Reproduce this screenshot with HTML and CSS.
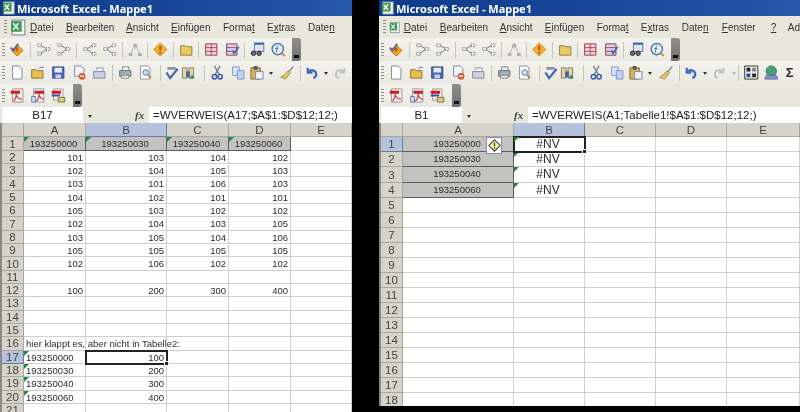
FILE: index.html
```html
<!DOCTYPE html>
<html lang="de">
  <head>
    <meta charset="UTF-8" />
    <title>Microsoft Excel - Mappe1</title>
    <link rel="stylesheet" href="styles.css">
  </head>
  <body>
    <!-- shared toolbar icons -->
    <svg class="defs" width="0" height="0">
      <symbol id="i-xl" viewBox="0 0 16 16"><rect x="2" y="1" width="12" height="14" fill="#f4f4e8" stroke="#7d8aa8"/><rect x="1" y="2" width="10" height="10" fill="#3f9a55"/><path d="M3 4l5 6M8 4l-5 6" stroke="#fff" stroke-width="1.4"/></symbol>
      <symbol id="i-check" viewBox="0 0 16 16"><path d="M8 3l6 6-6 6-6-6z" fill="#f0a818" stroke="#b86c10"/><path d="M8 6v4" stroke="#c0401c" stroke-width="2"/><path d="M1 6l3 3 5-7" fill="none" stroke="#5a6aa0" stroke-width="2"/></symbol>
      <symbol id="i-prec" viewBox="0 0 16 16"><g fill="none" stroke="#666"><path d="M2 2h4v3H2zM2 11h4v3H2zM11 6h4v3h-4z" stroke-dasharray="1 1"/><path d="M6 4l5 3M6 12l5-4" stroke="#5c6ca8"/></g></symbol>
      <symbol id="i-dep" viewBox="0 0 16 16"><g fill="none" stroke="#666"><path d="M2 6h4v3H2zM11 2h4v3h-4zM11 11h4v3h-4z" stroke-dasharray="1 1"/><path d="M6 7l5-3M6 8l5 4" stroke="#5c6ca8"/></g></symbol>
      <symbol id="i-rem" viewBox="0 0 16 16"><g fill="none" stroke="#777" stroke-dasharray="1 1"><path d="M8 2l-5 11M8 2l5 11M8 2v5"/></g><path d="M6 2h4v3H6zM1 12h4v3H1zM11 12h4v3h-4z" fill="#aab"/></symbol>
      <symbol id="i-warn" viewBox="0 0 16 16"><path d="M8 1l7 7-7 7-7-7z" fill="#f2b42c" stroke="#c98a1c"/><path d="M8 4v5M8 10.5v2" stroke="#c8401c" stroke-width="2"/></symbol>
      <symbol id="i-smart" viewBox="0 0 16 16"><path d="M8 1l7 7-7 7-7-7z" fill="#f6f0a0" stroke="#3c3c30" stroke-width="1.3"/><path d="M8 4.5v4.5M8 10v2" stroke="#333" stroke-width="1.5"/></symbol>
      <symbol id="i-folder" viewBox="0 0 16 16"><path d="M2 4h5l1 1h6v9H2z" fill="#eccb60" stroke="#8a7a4c"/></symbol>
      <symbol id="i-watch" viewBox="0 0 16 16"><path d="M2 2h12v12H2z" fill="#e8d8dc" stroke="#a03048"/><path d="M2 6h12M2 10h12M8 2v12" stroke="#b84058"/></symbol>
      <symbol id="i-watch2" viewBox="0 0 16 16"><path d="M2 2h11v12H2z" fill="#dcd4e4" stroke="#803858"/><path d="M2 6h11M2 10h11" stroke="#a84060"/><path d="M8 9l2 3 5-7" fill="none" stroke="#506ab0" stroke-width="2"/></symbol>
      <symbol id="i-eval" viewBox="0 0 16 16"><rect x="5" y="1" width="10" height="9" fill="#dfe4ee" stroke="#5f78a8"/><path d="M5 1h10v2H5z" fill="#3c64b0"/><circle cx="4" cy="12" r="2.4" fill="#667" stroke="#333"/><circle cx="10" cy="12" r="2.4" fill="#667" stroke="#333"/></symbol>
      <symbol id="i-fx" viewBox="0 0 16 16"><circle cx="7.5" cy="7.5" r="6" fill="#e4ecf6" stroke="#5878a8" stroke-width="1.6"/><path d="M12 12l3 3" stroke="#c89038" stroke-width="2"/><path d="M8 4c-2 0-1 3-2 7M5 7h3" fill="none" stroke="#3c64a8"/></symbol>
      <symbol id="i-new" viewBox="0 0 16 16"><path d="M3 1h7l3 3v11H3z" fill="#fff" stroke="#7a8598"/></symbol>
      <symbol id="i-open" viewBox="0 0 16 16"><path d="M1 5h5l1 1h6v8H1z" fill="#e8c050" stroke="#8c7038"/><path d="M9 4c1-2 3-2 5-1" fill="none" stroke="#4c6cb0"/></symbol>
      <symbol id="i-save" viewBox="0 0 16 16"><path d="M2 2h12v12H2z" fill="#4c64b4" stroke="#384c90"/><path d="M4 3h8v5H4z" fill="#e8ecf4"/><path d="M5 10h6v4H5z" fill="#c8cede"/></symbol>
      <symbol id="i-perm" viewBox="0 0 16 16"><path d="M3 1h7l3 3v8H3z" fill="#f4f4f8" stroke="#7a85a0"/><circle cx="11" cy="12" r="3.6" fill="#d85a30"/><path d="M9 12h4" stroke="#fff" stroke-width="1.4"/></symbol>
      <symbol id="i-mail" viewBox="0 0 16 16"><path d="M5 5V3h7v4" fill="#eef" stroke="#8a94aa"/><path d="M2 7h12v7H2z" fill="#cdd3df" stroke="#7f8aa0"/><path d="M5 7h6" stroke="#8a94aa"/></symbol>
      <symbol id="i-print" viewBox="0 0 16 16"><path d="M5 2h7v4H5z" fill="#f0f2f4" stroke="#7c8690"/><path d="M2 6h12v6H2z" fill="#a7b0b4" stroke="#66707a"/><path d="M4 11h8v3H4z" fill="#f4f4f4" stroke="#77808a"/><path d="M3 8h2" stroke="#46a860"/></symbol>
      <symbol id="i-prev" viewBox="0 0 16 16"><path d="M3 1h8l2 2v12H3z" fill="#fff" stroke="#8a90a0"/><circle cx="8.5" cy="8" r="3" fill="#cfe0f0" stroke="#59708e"/><path d="M11 10.5l3 3.5" stroke="#b88838" stroke-width="2"/></symbol>
      <symbol id="i-spell" viewBox="0 0 16 16"><path d="M2 8l4 6 8-10" fill="none" stroke="#4a66b0" stroke-width="2.4"/><path d="M3 2h9v3H3z" fill="#8a93a8"/></symbol>
      <symbol id="i-res" viewBox="0 0 16 16"><path d="M2 3h5v11H2zM9 3h5v11H9z" fill="#e2d6a4" stroke="#80806a"/><path d="M6 7h4v6H6z" fill="#4e62a0"/><circle cx="12.5" cy="13" r="2" fill="#486" /></symbol>
      <symbol id="i-cut" viewBox="0 0 16 16"><path d="M5 1l5 9M11 1L6 10" stroke="#7a8290" stroke-width="1.5"/><circle cx="5" cy="12.5" r="2.3" fill="none" stroke="#3a5ca8" stroke-width="1.6"/><circle cx="11" cy="12.5" r="2.3" fill="none" stroke="#3a5ca8" stroke-width="1.6"/></symbol>
      <symbol id="i-copy" viewBox="0 0 16 16"><path d="M2 2h7v9H2z" fill="#dce6f6" stroke="#7c94c4"/><path d="M7 6h7v9H7z" fill="#c4d4f0" stroke="#7c94c4"/></symbol>
      <symbol id="i-paste" viewBox="0 0 16 16"><path d="M2 3h10v12H2z" fill="#d8b458" stroke="#806828"/><path d="M5 1h4v4H5z" fill="#556" /><path d="M7 7h8v8H7z" fill="#f0f2f8" stroke="#7c88a8"/></symbol>
      <symbol id="i-brush" viewBox="0 0 16 16"><path d="M9 7l5-6 1 1-5 6z" fill="#7a8aa0"/><path d="M9 6l2 3-5 6-5-2c3-1 5-4 8-7z" fill="#e6c660" stroke="#9c8a40"/></symbol>
      <symbol id="i-undo" viewBox="0 0 16 16"><path d="M4 3v5h5M4 8c3-4 9-3 9 2 0 2-1 3-3 4" fill="none" stroke="#3f6cc0" stroke-width="2.4"/></symbol>
      <symbol id="i-redo" viewBox="0 0 16 16"><path d="M12 3v5H7M12 8C9 4 3 5 3 10c0 2 1 3 3 4" fill="none" stroke="#c0c4c0" stroke-width="2.2"/></symbol>
      <symbol id="i-calc" viewBox="0 0 16 16"><path d="M1 1h14v14H1z" fill="#ecece4" stroke="#333"/><path d="M3 3h4v4H3zM9 9h4v4H9z" fill="#223"/><path d="M9 3h4v4H9z" fill="#7c8478"/><path d="M3 9h4v4H3z" fill="#2850b0"/></symbol>
      <symbol id="i-globe" viewBox="0 0 16 16"><circle cx="8" cy="6.5" r="5.5" fill="#4c9c78" stroke="#37746a"/><path d="M3 11h10l2 4H1z" fill="#8494c8" stroke="#5864a0"/></symbol>
      <symbol id="i-pdf" viewBox="0 0 16 16"><path d="M3 1h11v14H3z" fill="#f6f2f2" stroke="#a08c8c"/><path d="M1 3h10v3H1z" fill="#c81c24"/><path d="M7 6c0 4-1 6-3 8M7 8c1 2 3 4 6 4" fill="none" stroke="#d03038" stroke-width="1.2"/></symbol>
      <symbol id="i-pdf2" viewBox="0 0 16 16"><path d="M3 1h11v14H3z" fill="#f6f2f2" stroke="#8c98b8"/><path d="M4 3h10v3H4z" fill="#c81c24"/><path d="M9 6c0 4-1 6-3 8M9 8c1 2 3 4 5 4" fill="none" stroke="#d03038" stroke-width="1.2"/><path d="M1 9h4v6H1z" fill="#d8e0f0" stroke="#5878b8"/></symbol>
      <symbol id="i-pdf3" viewBox="0 0 16 16"><path d="M3 1h10v12H3z" fill="#f4f0e8" stroke="#a09c8c"/><path d="M1 3h10v3H1z" fill="#c81c24"/><path d="M1 7h9v2H1z" fill="#3c50b0"/><path d="M8 10h7v5H8z" fill="#d8c880" stroke="#807038"/></symbol>
    </svg>

    <section class="window left">
      <div class="titlebar"><svg class="app-icon"><use href="#i-xl" /></svg>Microsoft Excel - Mappe1</div>
      <nav class="menubar">
        <span class="grip"></span><svg class="doc-icon"><use href="#i-xl" /></svg>
        <span class="m-datei"><u>D</u>atei</span>
        <span class="m-bearb"><u>B</u>earbeiten</span>
        <span class="m-ansicht"><u>A</u>nsicht</span>
        <span class="m-einf"><u>E</u>infügen</span>
        <span class="m-format">Forma<u>t</u></span>
        <span class="m-extras">E<u>x</u>tras</span>
        <span class="m-daten">Date<u>n</u></span>
      </nav>
      <div class="toolrow">
        <div class="band">
          <span class="grip"></span>
          <svg class="btn"><use href="#i-check" /></svg><i class="sep"></i>
          <svg class="btn"><use href="#i-prec" /></svg><svg class="btn"><use href="#i-prec" /></svg><i class="sep"></i>
          <svg class="btn"><use href="#i-dep" /></svg><svg class="btn"><use href="#i-dep" /></svg><i class="sep"></i>
          <svg class="btn"><use href="#i-rem" /></svg><i class="sep"></i>
          <svg class="btn"><use href="#i-warn" /></svg><i class="sep"></i>
          <svg class="btn"><use href="#i-folder" /></svg><i class="sep"></i>
          <svg class="btn"><use href="#i-watch" /></svg><svg class="btn"><use href="#i-watch2" /></svg><i class="sep"></i>
          <svg class="btn"><use href="#i-eval" /></svg><svg class="btn"><use href="#i-fx" /></svg>
        </div>
        <span class="handle"></span>
      </div>
      <div class="toolrow">
        <div class="band fill">
          <span class="grip"></span>
          <svg class="btn"><use href="#i-new" /></svg><svg class="btn"><use href="#i-open" /></svg><svg class="btn"><use href="#i-save" /></svg><svg class="btn"><use href="#i-perm" /></svg><svg class="btn"><use href="#i-mail" /></svg><i class="sep"></i>
          <svg class="btn"><use href="#i-print" /></svg><svg class="btn"><use href="#i-prev" /></svg><i class="sep sep-a"></i>
          <svg class="btn tiny"><use href="#i-spell" /></svg><svg class="btn tiny"><use href="#i-res" /></svg><i class="sep sep-b"></i>
          <svg class="btn"><use href="#i-cut" /></svg><svg class="btn"><use href="#i-copy" /></svg><svg class="btn narrow"><use href="#i-paste" /></svg><b class="drop"></b><svg class="btn"><use href="#i-brush" /></svg><i class="sep"></i>
          <svg class="btn narrow"><use href="#i-undo" /></svg><b class="drop"></b><svg class="btn narrow"><use href="#i-redo" /></svg>
        </div>
      </div>
      <div class="toolrow">
        <div class="band">
          <span class="grip"></span>
          <svg class="btn"><use href="#i-pdf" /></svg><svg class="btn"><use href="#i-pdf2" /></svg><svg class="btn"><use href="#i-pdf3" /></svg>
        </div>
        <span class="handle"></span>
      </div>
      <div class="formula">
        <div class="namebox">B17</div>
        <b class="drop name-drop"></b>
        <em class="fx">fx</em>
        <div class="formula-input">=WVERWEIS(A17;$A$1:$D$12;12;)</div>
      </div>
      <div class="sheet">
        <div class="corner"></div><div class="hd">A</div><div class="hd on">B</div><div class="hd">C</div><div class="hd">D</div><div class="hd">E</div>
        <div class="rn">1</div><div class="c key tick">193250000</div><div class="c key tick">193250030</div><div class="c key tick">193250040</div><div class="c key tick">193250060</div><div class="c"></div>
        <div class="rn">2</div><div class="c">101</div><div class="c">103</div><div class="c">104</div><div class="c">102</div><div class="c"></div>
        <div class="rn">3</div><div class="c">102</div><div class="c">104</div><div class="c">105</div><div class="c">103</div><div class="c"></div>
        <div class="rn">4</div><div class="c">103</div><div class="c">101</div><div class="c">106</div><div class="c">103</div><div class="c"></div>
        <div class="rn">5</div><div class="c">104</div><div class="c">102</div><div class="c">101</div><div class="c">101</div><div class="c"></div>
        <div class="rn">6</div><div class="c">105</div><div class="c">103</div><div class="c">102</div><div class="c">102</div><div class="c"></div>
        <div class="rn">7</div><div class="c">102</div><div class="c">104</div><div class="c">103</div><div class="c">105</div><div class="c"></div>
        <div class="rn">8</div><div class="c">103</div><div class="c">105</div><div class="c">104</div><div class="c">106</div><div class="c"></div>
        <div class="rn">9</div><div class="c">105</div><div class="c">105</div><div class="c">105</div><div class="c">105</div><div class="c"></div>
        <div class="rn">10</div><div class="c">102</div><div class="c">106</div><div class="c">102</div><div class="c">102</div><div class="c"></div>
        <div class="rn">11</div><div class="c"></div><div class="c"></div><div class="c"></div><div class="c"></div><div class="c"></div>
        <div class="rn">12</div><div class="c">100</div><div class="c">200</div><div class="c">300</div><div class="c">400</div><div class="c"></div>
        <div class="rn">13</div><div class="c"></div><div class="c"></div><div class="c"></div><div class="c"></div><div class="c"></div>
        <div class="rn">14</div><div class="c"></div><div class="c"></div><div class="c"></div><div class="c"></div><div class="c"></div>
        <div class="rn">15</div><div class="c"></div><div class="c"></div><div class="c"></div><div class="c"></div><div class="c"></div>
        <div class="rn">16</div><div class="c text">hier klappt es, aber nicht in Tabelle2:</div><div class="c"></div><div class="c"></div><div class="c"></div><div class="c"></div>
        <div class="rn on">17</div><div class="c text tick">193250000</div><div class="c current">100</div><div class="c"></div><div class="c"></div><div class="c"></div>
        <div class="rn">18</div><div class="c text tick">193250030</div><div class="c">200</div><div class="c"></div><div class="c"></div><div class="c"></div>
        <div class="rn">19</div><div class="c text tick">193250040</div><div class="c">300</div><div class="c"></div><div class="c"></div><div class="c"></div>
        <div class="rn">20</div><div class="c text tick">193250060</div><div class="c">400</div><div class="c"></div><div class="c"></div><div class="c"></div>
        <div class="rn">21</div><div class="c"></div><div class="c"></div><div class="c"></div><div class="c"></div><div class="c"></div>
      </div>
    </section>

    <section class="window right">
      <div class="titlebar"><svg class="app-icon"><use href="#i-xl" /></svg>Microsoft Excel - Mappe1</div>
      <nav class="menubar">
        <span class="grip"></span><svg class="doc-icon"><use href="#i-xl" /></svg>
        <span class="m-datei"><u>D</u>atei</span>
        <span class="m-bearb"><u>B</u>earbeiten</span>
        <span class="m-ansicht"><u>A</u>nsicht</span>
        <span class="m-einf"><u>E</u>infügen</span>
        <span class="m-format">Forma<u>t</u></span>
        <span class="m-extras">E<u>x</u>tras</span>
        <span class="m-daten">Date<u>n</u></span>
        <span class="m-fenster"><u>F</u>enster</span>
        <span class="m-help"><u>?</u></span>
        <span>Ad</span>
      </nav>
      <div class="toolrow">
        <div class="band">
          <span class="grip"></span>
          <svg class="btn"><use href="#i-check" /></svg><i class="sep"></i>
          <svg class="btn"><use href="#i-prec" /></svg><svg class="btn"><use href="#i-prec" /></svg><i class="sep"></i>
          <svg class="btn"><use href="#i-dep" /></svg><svg class="btn"><use href="#i-dep" /></svg><i class="sep"></i>
          <svg class="btn"><use href="#i-rem" /></svg><i class="sep"></i>
          <svg class="btn"><use href="#i-warn" /></svg><i class="sep"></i>
          <svg class="btn"><use href="#i-folder" /></svg><i class="sep"></i>
          <svg class="btn"><use href="#i-watch" /></svg><svg class="btn"><use href="#i-watch2" /></svg><i class="sep"></i>
          <svg class="btn"><use href="#i-eval" /></svg><svg class="btn"><use href="#i-fx" /></svg>
        </div>
        <span class="handle"></span>
      </div>
      <div class="toolrow">
        <div class="band fill">
          <span class="grip"></span>
          <svg class="btn"><use href="#i-new" /></svg><svg class="btn"><use href="#i-open" /></svg><svg class="btn"><use href="#i-save" /></svg><svg class="btn"><use href="#i-perm" /></svg><svg class="btn"><use href="#i-mail" /></svg><i class="sep"></i>
          <svg class="btn"><use href="#i-print" /></svg><svg class="btn"><use href="#i-prev" /></svg><i class="sep sep-a"></i>
          <svg class="btn tiny"><use href="#i-spell" /></svg><svg class="btn tiny"><use href="#i-res" /></svg><i class="sep sep-b"></i>
          <svg class="btn"><use href="#i-cut" /></svg><svg class="btn"><use href="#i-copy" /></svg><svg class="btn narrow"><use href="#i-paste" /></svg><b class="drop"></b><svg class="btn"><use href="#i-brush" /></svg><i class="sep"></i>
          <svg class="btn narrow"><use href="#i-undo" /></svg><b class="drop"></b><svg class="btn narrow"><use href="#i-redo" /></svg><b class="drop faint"></b><i class="sep"></i>
          <svg class="btn"><use href="#i-calc" /></svg><svg class="btn"><use href="#i-globe" /></svg>
          <span class="sigma">Σ</span>
        </div>
      </div>
      <div class="toolrow">
        <div class="band">
          <span class="grip"></span>
          <svg class="btn"><use href="#i-pdf" /></svg><svg class="btn"><use href="#i-pdf2" /></svg><svg class="btn"><use href="#i-pdf3" /></svg>
        </div>
        <span class="handle"></span>
      </div>
      <div class="formula">
        <div class="namebox">B1</div>
        <b class="drop name-drop"></b>
        <em class="fx">fx</em>
        <div class="formula-input">=WVERWEIS(A1;Tabelle1!$A$1:$D$12;12;)</div>
      </div>
      <div class="sheet">
        <div class="corner"></div><div class="hd">A</div><div class="hd on">B</div><div class="hd">C</div><div class="hd">D</div><div class="hd">E</div>
        <div class="rn on">1</div><div class="c key">193250000<span class="smart"><svg><use href="#i-smart" /></svg></span></div><div class="c nv current tick">#NV</div><div class="c"></div><div class="c"></div><div class="c"></div>
        <div class="rn">2</div><div class="c key">193250030</div><div class="c nv tick">#NV</div><div class="c"></div><div class="c"></div><div class="c"></div>
        <div class="rn">3</div><div class="c key">193250040</div><div class="c nv tick">#NV</div><div class="c"></div><div class="c"></div><div class="c"></div>
        <div class="rn">4</div><div class="c key">193250060</div><div class="c nv tick">#NV</div><div class="c"></div><div class="c"></div><div class="c"></div>
        <div class="rn">5</div><div class="c"></div><div class="c"></div><div class="c"></div><div class="c"></div><div class="c"></div>
        <div class="rn">6</div><div class="c"></div><div class="c"></div><div class="c"></div><div class="c"></div><div class="c"></div>
        <div class="rn">7</div><div class="c"></div><div class="c"></div><div class="c"></div><div class="c"></div><div class="c"></div>
        <div class="rn">8</div><div class="c"></div><div class="c"></div><div class="c"></div><div class="c"></div><div class="c"></div>
        <div class="rn">9</div><div class="c"></div><div class="c"></div><div class="c"></div><div class="c"></div><div class="c"></div>
        <div class="rn">10</div><div class="c"></div><div class="c"></div><div class="c"></div><div class="c"></div><div class="c"></div>
        <div class="rn">11</div><div class="c"></div><div class="c"></div><div class="c"></div><div class="c"></div><div class="c"></div>
        <div class="rn">12</div><div class="c"></div><div class="c"></div><div class="c"></div><div class="c"></div><div class="c"></div>
        <div class="rn">13</div><div class="c"></div><div class="c"></div><div class="c"></div><div class="c"></div><div class="c"></div>
        <div class="rn">14</div><div class="c"></div><div class="c"></div><div class="c"></div><div class="c"></div><div class="c"></div>
        <div class="rn">15</div><div class="c"></div><div class="c"></div><div class="c"></div><div class="c"></div><div class="c"></div>
        <div class="rn">16</div><div class="c"></div><div class="c"></div><div class="c"></div><div class="c"></div><div class="c"></div>
        <div class="rn">17</div><div class="c"></div><div class="c"></div><div class="c"></div><div class="c"></div><div class="c"></div>
        <div class="rn">18</div><div class="c"></div><div class="c"></div><div class="c"></div><div class="c"></div><div class="c"></div>
      </div>
    </section>
  </body>
</html>
```

FILE: styles.css
```css
/* two Excel 2003 windows side by side on black */
body {
  margin: 0;
  width: 800px;
  height: 412px;
  overflow: hidden;
  display: flex;
  background-color: #000;
  font-family: "Liberation Sans", Arial, sans-serif;
  color: #2c2c2c;
}
.defs {
  position: absolute;
}
.window {
  display: flex;
  flex-direction: column;
  overflow: hidden;
  background-color: #e9e6dc;
  filter: blur(0.45px);
}
.left {
  width: 352px;
  height: 412px;
}
.right {
  width: 421px;
  height: 406px;
  margin-left: 27px;
}

.titlebar {
  height: 16px;
  flex: none;
  display: flex;
  align-items: center;
  gap: 1px;
  padding-left: 2px;
  background: linear-gradient(to right, #0f3a8a, #1a4a9e 60%, #2558a8);
  color: #fff;
  font-family: "Noto Sans", sans-serif;
  font-size: 11px;
  font-weight: bold;
}
.app-icon {
  width: 14px;
  height: 14px;
}

.menubar {
  height: 22px;
  flex: none;
  display: flex;
  align-items: center;
  padding-left: 2px;
  font-size: 10px;
  color: #333;
}
.doc-icon {
  width: 17px;
  height: 17px;
  margin: 0 3px 0 1px;
}
.menubar span:not(.grip) {
  flex: none;
}
.m-datei { width: 36px; }
.m-bearb { width: 60px; }
.m-ansicht { width: 45px; }
.m-einf { width: 52px; }
.m-format { width: 44px; }
.m-extras { width: 41px; }
.m-daten { width: 40px; }
.m-fenster { width: 49px; }
.m-help { width: 17px; }

.grip {
  width: 3px;
  height: 14px;
  flex: none;
  margin: 0 2px 0 2px;
  background: repeating-linear-gradient(to bottom, #8d8d88 0 1px, transparent 1px 3px);
}

.toolrow {
  flex: none;
  height: 23px;
  display: flex;
  align-items: stretch;
}
.band {
  display: flex;
  align-items: center;
  padding-right: 4px;
  background: linear-gradient(to bottom, #f3f2ec, #eae9e1);
  border-radius: 3px 0 0 3px;
}
.band.fill {
  flex: 1;
  overflow: hidden;
  padding-right: 0;
}
.btn {
  width: 20.5px;
  height: 15px;
  flex: none;
}
.btn.narrow {
  width: 17px;
}
.btn.tiny {
  width: 16px;
}
.sep {
  width: 1px;
  height: 16px;
  flex: none;
  margin: 0 2px;
  background-color: #c6c5bd;
}
.sep.sep-a {
  margin: 0 3.75px 0 4px;
}
.sep.sep-b {
  margin: 0 2px 0 8px;
}
.drop {
  width: 0;
  height: 0;
  flex: none;
  margin: 2px 4px 0;
  border-left: 2.5px solid transparent;
  border-right: 2.5px solid transparent;
  border-top: 3px solid #333;
}
.drop.faint {
  margin-right: 0;
  border-top-color: #b5b5b0;
}
.handle {
  width: 9px;
  background: linear-gradient(to bottom, #8f8f8c, #6f6f6e);
  border-radius: 0 3px 3px 0;
  position: relative;
}
.handle::after {
  content: "";
  position: absolute;
  left: 2px;
  bottom: 3px;
  width: 5px;
  height: 3px;
  background-color: #111;
}
.sigma {
  font-size: 13px;
  font-weight: bold;
  margin-left: 4px;
}

.formula {
  flex: none;
  height: 16px;
  display: flex;
  align-items: center;
  font-size: 11.5px;
  color: #222;
}
.namebox {
  width: 81px;
  height: 16px;
  margin-left: 2px;
  line-height: 16px;
  text-align: center;
  background-color: #fff;
}
.name-drop {
  margin: 2px 0 0 5px;
}
.fx {
  width: 12px;
  margin-left: 43px;
  font-family: "Liberation Serif", serif;
  font-size: 11px;
  font-weight: bold;
  color: #444;
}
.formula-input {
  flex: 1;
  height: 16px;
  margin-left: 2px;
  padding-left: 4px;
  line-height: 16px;
  white-space: nowrap;
  background-color: #fff;
}

.sheet {
  flex: none;
  display: grid;
  font-size: 9.5px;
  background-color: #fff;
  border-left: 2px solid #8a8982;
}
.left .sheet {
  grid-template-columns: 22px 62px 81px 62px 62px 61px;
  grid-template-rows: 14.4px;
  grid-auto-rows: 13.33px;
}
.right .sheet {
  grid-template-columns: 22px 111px 71px 71px 71px 73px;
  grid-template-rows: 14.4px;
  grid-auto-rows: 15.05px;
}
.corner,
.hd,
.rn {
  display: flex;
  align-items: center;
  justify-content: center;
  overflow: hidden;
  background-color: #d6d3ca;
  border-right: 1px solid #a8a69e;
  border-bottom: 1px solid #a8a69e;
  box-sizing: border-box;
  font-size: 11.5px;
  color: #444;
}
.hd.on,
.rn.on {
  background-color: #b4c2dc;
  border-color: #6a7a9c;
}
.c {
  position: relative;
  box-sizing: border-box;
  padding-right: 2px;
  overflow: visible;
  white-space: nowrap;
  text-align: right;
  line-height: 14px;
  border-right: 1px solid #d0d0ce;
  border-bottom: 1px solid #d0d0ce;
}
.left .c {
  line-height: 13px;
}
.c.key {
  text-align: center;
  background-color: #c2c2c0;
  border-right-color: #5e5e5e;
  border-bottom-color: #5e5e5e;
}
.c.text {
  padding-left: 2px;
  text-align: left;
}
.c.nv {
  text-align: center;
  font-size: 12px;
}
.c.tick::before {
  content: "";
  position: absolute;
  left: 0;
  top: 0;
  border-top: 5px solid #1f8a3c;
  border-right: 5px solid transparent;
}
.c.current {
  outline: 2px solid #222;
  outline-offset: -1px;
  z-index: 1;
}
.c.current::after {
  content: "";
  position: absolute;
  right: -3px;
  bottom: -3px;
  width: 5px;
  height: 5px;
  background-color: #222;
  border: 1px solid #fff;
  box-sizing: border-box;
}
.smart {
  position: absolute;
  right: 11px;
  top: 0;
  width: 16px;
  height: 17px;
  display: flex;
  align-items: center;
  justify-content: center;
  background-color: #fff;
  border: 1px solid #7f8db5;
  box-sizing: border-box;
  z-index: 2;
}
.smart svg {
  width: 13px;
  height: 13px;
}
```
